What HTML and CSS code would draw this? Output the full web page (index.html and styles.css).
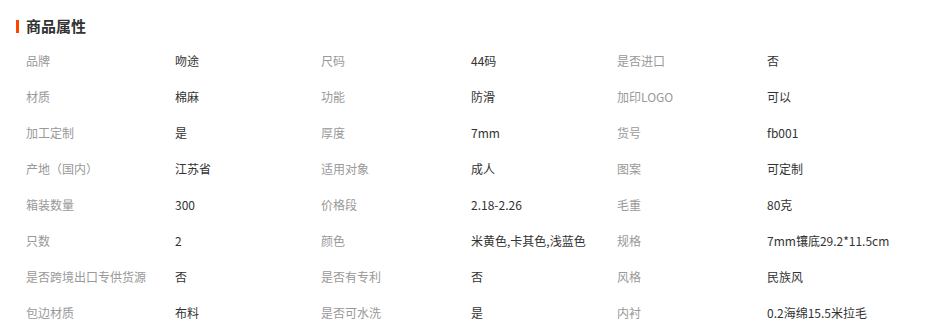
FILE: index.html
```html
<!DOCTYPE html>
<html lang="zh-CN">
<head>
<meta charset="utf-8">
<title>商品属性</title>
<link rel="stylesheet" href="styles.css">
</head>
<body>
<section class="attrs">
  <h2 class="attrs-title"><span class="bar"></span>商品属性</h2>
  <div class="grid">
    <div class="k">品牌</div><div class="v">吻途</div>
    <div class="k">尺码</div><div class="v">44码</div>
    <div class="k">是否进口</div><div class="v">否</div>

    <div class="k">材质</div><div class="v">棉麻</div>
    <div class="k">功能</div><div class="v">防滑</div>
    <div class="k">加印LOGO</div><div class="v">可以</div>

    <div class="k">加工定制</div><div class="v">是</div>
    <div class="k">厚度</div><div class="v">7mm</div>
    <div class="k">货号</div><div class="v">fb001</div>

    <div class="k">产地（国内）</div><div class="v">江苏省</div>
    <div class="k">适用对象</div><div class="v">成人</div>
    <div class="k">图案</div><div class="v">可定制</div>

    <div class="k">箱装数量</div><div class="v">300</div>
    <div class="k">价格段</div><div class="v">2.18-2.26</div>
    <div class="k">毛重</div><div class="v">80克</div>

    <div class="k">只数</div><div class="v">2</div>
    <div class="k">颜色</div><div class="v">米黄色,卡其色,浅蓝色</div>
    <div class="k">规格</div><div class="v">7mm镶底29.2*11.5cm</div>

    <div class="k">是否跨境出口专供货源</div><div class="v">否</div>
    <div class="k">是否有专利</div><div class="v">否</div>
    <div class="k">风格</div><div class="v">民族风</div>

    <div class="k">包边材质</div><div class="v">布料</div>
    <div class="k">是否可水洗</div><div class="v">是</div>
    <div class="k">内衬</div><div class="v">0.2海绵15.5米拉毛</div>
  </div>
</section>
</body>
</html>
```
FILE: styles.css
```css
html, body {
  margin: 0;
  padding: 0;
  background: #fff;
}
body {
  font-family: "Noto Sans CJK SC", "Noto Sans", sans-serif;
  font-size: 12px;
  color: #333;
}
.attrs {
  padding: 16px 0 0 16px;
}
.attrs-title {
  display: flex;
  align-items: center;
  gap: 7px;
  margin: 0;
  height: 20px;
  font-size: 15px;
  font-weight: bold;
  color: #333;
  line-height: 20px;
}
.bar {
  display: block;
  width: 3px;
  height: 13px;
  background: #ff4400;
}
.grid {
  display: grid;
  grid-template-columns: 149px 146px 150px 146px 150px 1fr;
  grid-auto-rows: 36px;
  align-items: center;
  margin-top: 6px;
  padding-left: 10px;
}
.k {
  color: #999;
  white-space: nowrap;
}
.v {
  color: #333;
  white-space: nowrap;
}
```
